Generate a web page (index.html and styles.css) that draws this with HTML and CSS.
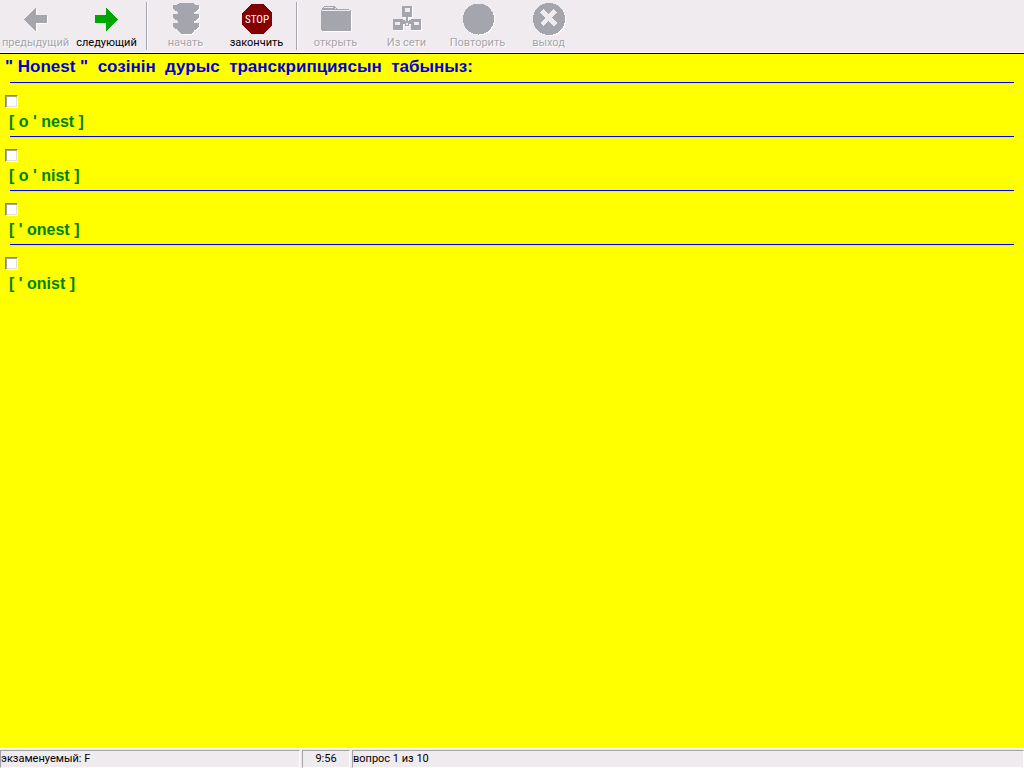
FILE: index.html
```html
<!DOCTYPE html>
<html lang="ru">
<head>
<meta charset="utf-8">
<meta name="viewport" content="width=device-width, initial-scale=1">
<title>Тест</title>
<link rel="stylesheet" href="styles.css">
</head>
<body>
<header class="toolbar">
  <button class="tool" type="button" disabled>
    <svg class="icon" viewBox="0 0 71 36" shape-rendering="crispEdges"><path d="M24 19.5 36 8V15H47V23H36V31Z"/></svg>
    <span>предыдущий</span>
  </button>
  <button class="tool" type="button">
    <svg class="icon green" viewBox="0 0 71 36" shape-rendering="crispEdges"><path d="M47 19.5 35 8V15H24V23H35V31Z"/></svg>
    <span>следующий</span>
  </button>
  <div class="divider"></div>
  <button class="tool" type="button" disabled>
    <svg class="icon" viewBox="0 0 71 36" shape-rendering="crispEdges"><path d="M27 4 30 3H42L45 4V5H49V8L47 11 44 12V14H49V17L47 20 44 21V23H49V26L47 29 44 30V31L41 34H31L28 31V30L25 29 23 26V23H28V21L25 20 23 17V14H28V12L25 11 23 8V5H27Z"/></svg>
    <span>начать</span>
  </button>
  <button class="tool" type="button">
    <svg class="icon stop" viewBox="0 0 71 36"><path shape-rendering="crispEdges" d="M30 4H42L51 13V25L42 34H30L21 25V13Z"/><text x="36" y="23" text-anchor="middle">STOP</text></svg>
    <span>закончить</span>
  </button>
  <div class="divider"></div>
  <button class="tool" type="button" disabled>
    <svg class="icon" viewBox="0 0 71 36" shape-rendering="crispEdges"><path d="M21 10H22V8L24 6H34L37 9H49V10H51V30L50 31H22L21 30Z"/><path class="light" d="M22 11V10H50V11ZM24 7H33V8H24ZM35 8H36V9H35Z"/></svg>
    <span>открыть</span>
  </button>
  <button class="tool" type="button" disabled>
    <svg class="icon" viewBox="0 0 71 36" shape-rendering="crispEdges"><path d="M31 6H41V17H31ZM22 19H32V30H22ZM40 19H50V30H40ZM35 17H37V21H38V20H40V24H38V26H34V24H32V20H34V21H35Z"/><path class="light" d="M34 8H39V12H34ZM24 22H29V25H24ZM43 22H48V25H43ZM35 23H37V25H35Z"/></svg>
    <span>Из сети</span>
  </button>
  <button class="tool" type="button" disabled>
    <svg class="icon" viewBox="0 0 71 36" shape-rendering="crispEdges"><circle cx="36.5" cy="19" r="15.5"/></svg>
    <span>Повторить</span>
  </button>
  <button class="tool" type="button" disabled>
    <svg class="icon" viewBox="0 0 71 36" shape-rendering="crispEdges"><circle cx="36" cy="19" r="16"/><path class="light" d="M27 12 30 9 35 14 40 9 44 12 39 18 44 23 41 26 35 21 30 26 27 23 32 18Z"/></svg>
    <span>выход</span>
  </button>
</header>
<main class="question">
  <h1 class="title">" Honest "&nbsp; созінін&nbsp; дурыс&nbsp; транскрипциясын&nbsp; табыныз:</h1>
  <div class="option"><input class="check" type="checkbox" id="a1"><label class="answer" for="a1">[ o ' nest ]</label></div>
  <div class="option"><input class="check" type="checkbox" id="a2"><label class="answer" for="a2">[ o ' nist ]</label></div>
  <div class="option"><input class="check" type="checkbox" id="a3"><label class="answer" for="a3">[ ' onest ]</label></div>
  <div class="option"><input class="check" type="checkbox" id="a4"><label class="answer" for="a4">[ ' onist ]</label></div>
</main>
<footer class="status">
  <div class="cell user">экзаменуемый: F</div>
  <div class="cell time">9:56</div>
  <div class="cell progress">вопрос 1 из 10</div>
</footer>
</body>
</html>
```
FILE: styles.css
```css
* {
  box-sizing: border-box;
}

body {
  margin: 0;
  min-height: 100vh;
  display: flex;
  flex-direction: column;
  background: #ffff00;
  color: #000;
  font: 11px/14px Roboto, "Noto Sans", sans-serif;
}

.toolbar {
  display: flex;
  background: #efebef;
  border-bottom: 1px solid #000;
  box-shadow: inset 0 -1px #fff;
}

.tool {
  width: 71px;
  height: 53px;
  padding: 0 0 3px;
  border: 0;
  background: none;
  color: #000;
  font: inherit;
  display: flex;
  flex-direction: column;
  align-items: center;
  justify-content: flex-start;
  white-space: nowrap;
}

.tool:disabled {
  color: #a5a5ad;
  text-shadow: 1px 1px #fff;
}

.icon {
  display: block;
  width: 71px;
  height: 36px;
  flex: none;
  fill: #a5a5ad;
}

.tool:disabled .icon {
  filter: drop-shadow(1px 1px 0 #fff);
}

.green {
  fill: #00a500;
}

.stop {
  fill: #840000;
}

.stop text {
  fill: #fff;
  font: 11px "Roboto Condensed", "Open Sans Condensed", Lato, sans-serif;
}

.light {
  fill: #efebef;
}

.divider {
  width: 2px;
  margin: 2px 2px 3px 4px;
  border-left: 1px solid #a5a5ad;
  border-right: 1px solid #fff;
}

.question {
  flex: 1;
  font-family: "Liberation Sans", Arial, sans-serif;
  font-weight: bold;
}

.title {
  margin: 0;
  padding: 3px 5px 5px;
  font-size: 17px;
  line-height: 20px;
  color: #0000d6;
}

.option {
  display: flex;
  flex-direction: column;
  align-items: flex-start;
  gap: 4px;
  margin: 0 10px;
  padding: 12px 0 5px;
  border-top: 1px solid #0000ff;
}

.check {
  appearance: none;
  width: 13px;
  height: 13px;
  margin: 0 0 0 -5px;
  background: #fff;
  border: 1px solid;
  border-color: #848284 #fff #fff #848284;
  box-shadow: inset 1px 1px #a5a2a5, inset -1px -1px #dedfde;
}

.check:checked {
  background: #000;
}

.answer {
  margin-left: -1px;
  font-size: 16px;
  line-height: 19px;
  color: #008200;
}

.status {
  display: flex;
  gap: 2px;
  padding-top: 2px;
  background: #efebef;
  box-shadow: inset 0 1px #fff;
}

.cell {
  height: 18px;
  line-height: 16px;
  border: 1px solid;
  border-color: #a5a2a5 #fff #fff #a5a2a5;
}

.user {
  width: 300px;
}

.time {
  width: 48px;
  text-align: center;
}

.progress {
  flex: 1;
}
```
